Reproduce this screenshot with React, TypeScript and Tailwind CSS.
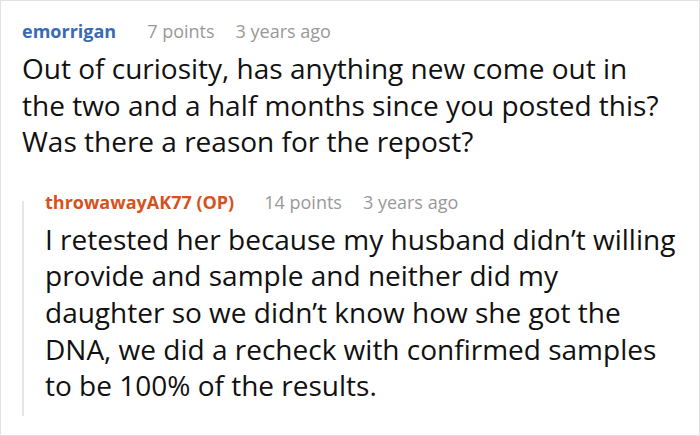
const meta = "text-[#999999] font-normal";

const question = [
  "Out of curiosity, has anything new come out in",
  "the two and a half months since you posted this?",
  "Was there a reason for the repost?",
];

const reply = [
  "I retested her because my husband didn’t willing",
  "provide and sample and neither did my",
  "daughter so we didn’t know how she got the",
  "DNA, we did a recheck with confirmed samples",
  "to be 100% of the results.",
];

const Lines = ({ lines }: { lines: string[] }) => (
  <p className="text-[28px] leading-[36.6px] text-[#111111] whitespace-nowrap">
    {lines.map((l) => (
      <span key={l} className="block">
        {l}
      </span>
    ))}
  </p>
);

const App = () => {
  return (
    <div
      className="w-[700px] h-[436px] border border-[#e2e2e2] bg-white overflow-hidden pl-[21px] pt-[18px]"
      style={{ fontFamily: '"Open Sans", "Noto Sans", sans-serif' }}
    >
      <div className="flex items-center text-[18px] leading-[24px]">
        <span className="font-bold text-[#3a6ab4]">emorrigan</span>
        <span className={`${meta} ml-[31px]`}>7 points</span>
        <span className={`${meta} ml-[21px]`}>3 years ago</span>
      </div>
      <div className="mt-[7px]">
        <Lines lines={question} />
      </div>

      <div className="flex mt-[30px]">
        <div className="w-[2px] bg-[#e6e6e6] mt-[11px] shrink-0" />
        <div className="pl-[21px] pb-[12px]">
          <div className="flex items-center text-[18px] leading-[24px]">
            <span className="font-bold text-[#d6521c]">throwawayAK77 (OP)</span>
            <span className={`${meta} ml-[30px]`}>14 points</span>
            <span className={`${meta} ml-[21px]`}>3 years ago</span>
          </div>
          <div className="mt-[7px]">
            <Lines lines={reply} />
          </div>
        </div>
      </div>
    </div>
  );
};

export default App;
